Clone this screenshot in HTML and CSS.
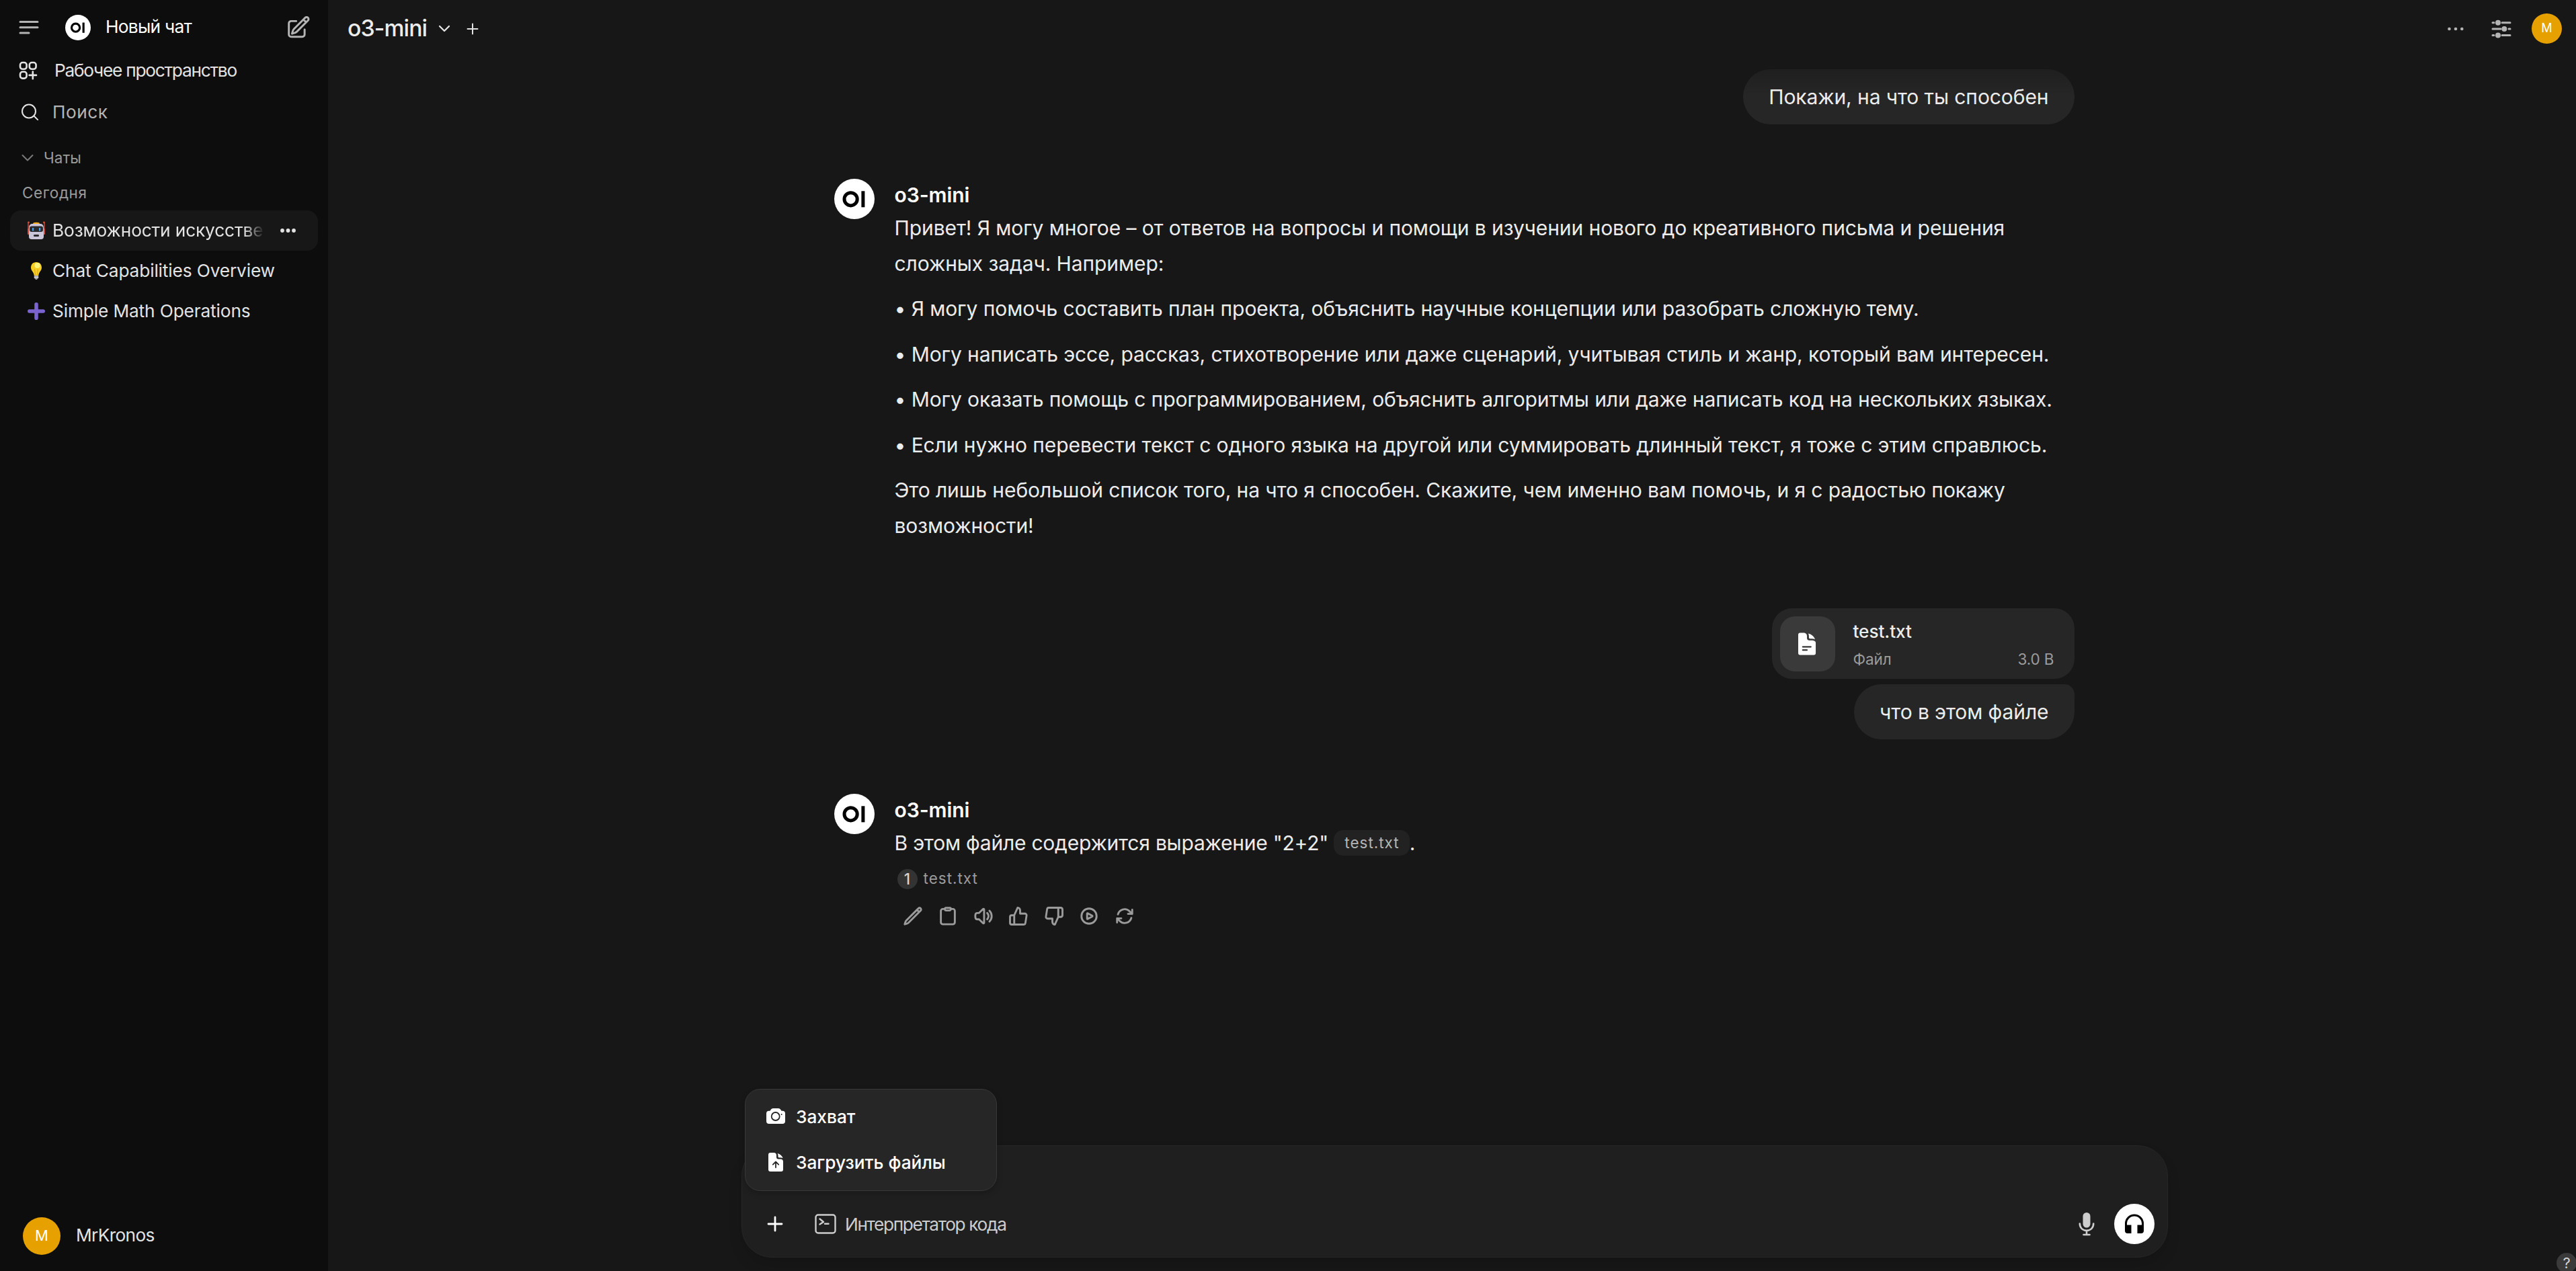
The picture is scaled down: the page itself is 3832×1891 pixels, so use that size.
FILE: index.html
```html
<!DOCTYPE html>
<html lang="ru">
<head>
  <meta charset="UTF-8" />
  <title>Open WebUI</title>
  <link rel="stylesheet" href="styles.css">
</head>
<body>
  <!-- shared icons -->
  <svg class="defs" width="0" height="0">
    <symbol id="logo" viewBox="0 0 60 60">
      <circle cx="30" cy="30" r="30" fill="#fff"/>
      <circle cx="24.6" cy="30.3" r="9.6" fill="none" stroke="#000" stroke-width="5"/>
      <rect x="40.4" y="18.3" width="5" height="24" fill="#000"/>
    </symbol>
  </svg>

  <aside class="sidebar">
    <div class="sidebar-top">
      <svg class="icon-menu" viewBox="0 0 30 22" fill="none" stroke="#b4b4b4" stroke-width="3" stroke-linecap="round"><path d="M2 2.5h26M2 10.7h26M2 19h13"/></svg>
      <svg class="brand-logo"><use href="#logo"/></svg>
      <span class="new-chat">Новый чат</span>
      <svg class="icon-edit" viewBox="0 0 24 24" fill="none" stroke="#b4b4b4" stroke-width="1.9" stroke-linecap="round" stroke-linejoin="round"><path d="m16.862 4.487 1.687-1.688a1.875 1.875 0 1 1 2.652 2.652L10.582 16.07a4.5 4.5 0 0 1-1.897 1.13L6 18l.8-2.685a4.5 4.5 0 0 1 1.13-1.897l8.932-8.931Zm0 0L19.5 7.125M18 14v4.75A2.25 2.25 0 0 1 15.75 21H5.25A2.25 2.25 0 0 1 3 18.75V8.25A2.25 2.25 0 0 1 5.25 6H10"/></svg>
    </div>

    <div class="nav-row workspace">
      <svg class="icon-workspace" viewBox="0 0 28 28" fill="none" stroke="#e3e3e3" stroke-width="2.6" stroke-linecap="round"><rect x="2" y="2" width="9.6" height="9.8" rx="3.6"/><rect x="15.8" y="2" width="9.8" height="9.8" rx="3.6"/><rect x="2" y="15.8" width="9.6" height="9.8" rx="3.6"/><path d="M20.8 15.6v10.6M15.6 20.9h10.4"/></svg>
      <span>Рабочее пространство</span>
    </div>

    <div class="nav-row search">
      <svg class="icon-search" viewBox="0 0 26 26" fill="none" stroke="#e3e3e3" stroke-width="2" stroke-linecap="round"><circle cx="11" cy="11.5" r="10"/><path d="m18.5 18.5 5.6 5.6"/></svg>
      <span>Поиск</span>
    </div>

    <div class="chats-label">
      <svg class="icon-chevron" viewBox="0 0 18 12" fill="none" stroke="#7a7a7a" stroke-width="2" stroke-linecap="round" stroke-linejoin="round"><path d="m1.5 2 7.5 7.5L16.5 2"/></svg>
      <span>Чаты</span>
    </div>
    <div class="day-label">Сегодня</div>

    <div class="chat-item active">
      <svg class="emoji" viewBox="0 0 26 26">
        <path d="M1 1v17M25 1v17" stroke="#dd4a35" stroke-width="1.4"/>
        <circle cx="1.5" cy="1" r="1.4" fill="#dd4a35"/><circle cx="24.5" cy="1" r="1.4" fill="#dd4a35"/>
        <rect x="0" y="10" width="26" height="9" rx="1" fill="#dd4a35"/>
        <ellipse cx="13" cy="3" rx="5" ry="2.2" fill="#f5ab1c"/>
        <path d="M6 3h14q4 1 4 6v13q0 4-4 4H6q-4 0-4-4V9q0-5 4-6z" fill="#cbc6da"/>
        <rect x="3" y="6.5" width="20" height="8.5" rx="3" fill="#2b2b2e"/>
        <rect x="7" y="9" width="2.2" height="4.5" fill="#4aa3ea"/><rect x="17" y="9" width="2.2" height="4.5" fill="#4aa3ea"/>
        <rect x="9" y="19" width="8" height="3" rx="1.2" fill="#2b2b2e"/>
      </svg>
      <span class="chat-title">Возможности искусственного</span>
      <svg class="icon-dots" viewBox="0 0 24 6" fill="#e3e3e3"><circle cx="3" cy="3" r="2.9"/><circle cx="11.5" cy="3" r="2.9"/><circle cx="20" cy="3" r="2.9"/></svg>
    </div>
    <div class="chat-item">
      <svg class="emoji" viewBox="0 0 26 26">
        <path d="M13 0c5 0 8 3.6 8 8 0 5-4.3 6.5-4.8 12H9.8C9.3 14.5 5 13 5 8c0-4.4 3-8 8-8z" fill="#f6cf22"/>
        <path d="M10.5 10.5 11.8 20M15.5 10.5 14.2 20" stroke="#d9a31a" fill="none"/>
        <circle cx="14.5" cy="5" r="4" fill="#fdf57b"/>
        <path d="M9.8 20h6.4v3.5L13.8 26h-1.6l-2.4-2.5z" fill="#a9a9a9"/>
        <path d="M9.8 22.4h6.4" stroke="#e2e2e2"/>
      </svg>
      <span class="chat-title">Chat Capabilities Overview</span>
    </div>
    <div class="chat-item">
      <svg class="emoji" viewBox="0 0 26 26" stroke="#7b63cf" stroke-width="5.6" stroke-linecap="round"><path d="M13 2.8v20.4M2.8 13h20.4"/></svg>
      <span class="chat-title">Simple Math Operations</span>
    </div>

    <div class="user">
      <span class="user-avatar">M</span>
      <span class="user-name">MrKronos</span>
    </div>
  </aside>

  <main class="main">
    <header class="header">
      <span class="model-name">o3-mini</span>
      <svg class="icon-chevron" viewBox="0 0 18 12" fill="none" stroke="#e3e3e3" stroke-width="2.3" stroke-linecap="round" stroke-linejoin="round"><path d="m2 2 7 7 7-7"/></svg>
      <svg class="icon-add" viewBox="0 0 18 18" stroke="#e3e3e3" stroke-width="2" stroke-linecap="round"><path d="M9 1.5v15M1.5 9h15"/></svg>
      <div class="header-right">
        <svg class="icon-more" viewBox="0 0 24 6" fill="#b4b4b4"><circle cx="2.5" cy="3" r="2.3"/><circle cx="12" cy="3" r="2.3"/><circle cx="21.3" cy="3" r="2.3"/></svg>
        <svg class="icon-sliders" viewBox="0 0 30 28" stroke="#b4b4b4" stroke-width="3" stroke-linecap="round"><path d="M2 4.7h2M16 4.7h12M2 14h12M26 14h2M2 23.4h2M16 23.4h12"/><g fill="#b4b4b4" stroke="none"><circle cx="10" cy="4.7" r="4"/><circle cx="19.3" cy="14" r="4"/><circle cx="10" cy="23.4" r="4"/></g></svg>
        <span class="user-avatar small">M</span>
      </div>
    </header>

    <section class="messages">
      <div class="bubble first">Покажи, на что ты способен</div>

      <article class="reply">
        <svg class="avatar"><use href="#logo"/></svg>
        <div class="reply-body">
          <div class="reply-name">o3-mini</div>
          <p>Привет! Я могу многое – от ответов на вопросы и помощи в изучении нового до креативного письма и решения<br>сложных задач. Например:</p>
          <p>• Я могу помочь составить план проекта, объяснить научные концепции или разобрать сложную тему.</p>
          <p>• Могу написать эссе, рассказ, стихотворение или даже сценарий, учитывая стиль и жанр, который вам интересен.</p>
          <p>• Могу оказать помощь с программированием, объяснить алгоритмы или даже написать код на нескольких языках.</p>
          <p>• Если нужно перевести текст с одного языка на другой или суммировать длинный текст, я тоже с этим справлюсь.</p>
          <p>Это лишь небольшой список того, на что я способен. Скажите, чем именно вам помочь, и я с радостью покажу<br>возможности!</p>
        </div>
      </article>

      <div class="file-card">
        <div class="file-icon">
          <svg viewBox="0 0 28 34"><path d="M3 0h6.5q4 1 4 5v3q0 3.500 3.500 3.500h5q5 .5 5 4V31q0 3-3 3H3q-3 0-3-3V3q0-3 3-3z" fill="#fff"/><path d="M15.500 1q8 2 10.500 9-2-1-5-1h-3q-1.500 0-1.500-1.500V5q0-2-1-4z" fill="#fff"/><path d="M7 21.500h12.500M7 26.500h6.500" stroke="#3a3a3a" stroke-width="2.200" stroke-linecap="round"/></svg>
        </div>
        <div class="file-info">
          <div class="file-name">test.txt</div>
          <div class="file-meta"><span>Файл</span><span>3.0 B</span></div>
        </div>
      </div>
      <div class="bubble attached">что в этом файле</div>

      <article class="reply">
        <svg class="avatar"><use href="#logo"/></svg>
        <div class="reply-body">
          <div class="reply-name">o3-mini</div>
          <p class="cited">В этом файле содержится выражение "2+2" <span class="source-chip">test.txt</span>.</p>
          <div class="source"><span class="source-num">1</span><span>test.txt</span></div>
          <div class="actions">
            <svg viewBox="0 0 24 24"><path d="m16.862 4.487 1.687-1.688a1.875 1.875 0 1 1 2.652 2.652L6.832 19.820a4.500 4.500 0 0 1-1.897 1.130l-2.685.8.8-2.685a4.500 4.500 0 0 1 1.130-1.897L16.863 4.487Zm0 0L19.500 7.125"/></svg>
            <svg viewBox="0 0 24 24"><path d="M8.500 3.500H6A2.300 2.300 0 0 0 3.700 5.800v13.600A2.300 2.300 0 0 0 6 21.700h12a2.300 2.300 0 0 0 2.300-2.300V5.800A2.300 2.300 0 0 0 18 3.500h-2.500M9.500 2.200h5a1 1 0 0 1 1 1v.6a1.500 1.500 0 0 1-1.500 1.500h-4a1.500 1.500 0 0 1-1.500-1.500v-.6a1 1 0 0 1 1-1z"/></svg>
            <svg viewBox="0 0 24 24"><path d="M19.114 5.636a9 9 0 0 1 0 12.728M16.463 8.288a5.250 5.250 0 0 1 0 7.424M6.750 8.250l4.720-4.720a.75.75 0 0 1 1.280.53v15.880a.75.75 0 0 1-1.280.53l-4.720-4.720H4.510c-.88 0-1.704-.507-1.938-1.354A9.009 9.009 0 0 1 2.250 12c0-.83.112-1.633.322-2.396C2.806 8.756 3.630 8.250 4.510 8.250H6.750Z"/></svg>
            <svg viewBox="0 0 24 24"><path d="M14 9V5a3 3 0 0 0-3-3l-4 9v11h11.280a2 2 0 0 0 2-1.700l1.380-9a2 2 0 0 0-2-2.300zM7 22H4a2 2 0 0 1-2-2v-7a2 2 0 0 1 2-2h3"/></svg>
            <svg viewBox="0 0 24 24"><path d="M10 15v4a3 3 0 0 0 3 3l4-9V2H5.720a2 2 0 0 0-2 1.700l-1.380 9a2 2 0 0 0 2 2.300zm7-13h2.670A2.310 2.310 0 0 1 22 4v7a2.310 2.310 0 0 1-2.330 2H17"/></svg>
            <svg viewBox="0 0 24 24"><path d="M21 12a9 9 0 1 1-18 0 9 9 0 0 1 18 0Z"/><path d="M15.910 11.672a.375.375 0 0 1 0 .656l-5.603 3.113a.375.375 0 0 1-.557-.328V8.887c0-.286.307-.466.557-.327l5.603 3.112Z"/></svg>
            <svg viewBox="0 0 24 24"><path d="M16.023 9.348h4.992v-.001M2.985 19.644v-4.992m0 0h4.992m-4.993 0 3.181 3.183a8.250 8.250 0 0 0 13.803-3.700M4.031 9.865a8.250 8.250 0 0 1 13.803-3.700l3.181 3.182m0-4.991v4.990"/></svg>
          </div>
        </div>
      </article>
    </section>

    <div class="composer">
      <svg class="icon-plus" viewBox="0 0 24 24" stroke="#fff" stroke-width="2.8" stroke-linecap="round"><path d="M12 2v20M2 12h20"/></svg>
      <div class="code-toggle">
        <svg viewBox="0 0 32 30" fill="none" stroke="#cdcdcd" stroke-width="2.4" stroke-linecap="round" stroke-linejoin="round"><rect x="1.5" y="1.5" width="29" height="27" rx="3.5"/><path d="m7.5 7.5 5.5 4.5-5.5 3.5M15 14.7h5.5"/></svg>
        <span>Интерпретатор кода</span>
      </div>
      <svg class="icon-mic" viewBox="0 0 24 36" fill="none" stroke="#cdcdcd" stroke-width="2.6" stroke-linecap="round"><rect x="6.5" y="1" width="11" height="22.5" rx="5.5" fill="#cdcdcd" stroke="none"/><path d="M1.8 17.5c0 6.5 4.6 10.4 10.2 10.4s10.2-3.9 10.2-10.400M12 28v5.500M7.500 34h9"/></svg>
      <button class="voice-btn">
        <svg viewBox="0 0 30 30"><path d="M2.5 19v-4.500a12.500 12.500 0 0 1 25 0V19" fill="none" stroke="#000" stroke-width="3"/><path d="M1 16.500h9.500V29H5q-4 0-4-4zM29 16.500h-9.500V29H25q4 0 4-4z"/></svg>
      </button>

      <div class="upload-menu">
        <div class="menu-item">
          <svg viewBox="0 0 28 28"><path d="M10 2h8q2 0 3 1.500l1.500 2.200H24q4 0 4 4V21q0 4-4 4H4q-4 0-4-4V9.700q0-4 4-4h1.500L7 3.500Q8 2 10 2z" fill="#fff"/><circle cx="13.700" cy="14" r="6" fill="none" stroke="#262626" stroke-width="1.800"/><circle cx="22.600" cy="11" r="1" fill="#262626"/></svg>
          <span>Захват</span>
        </div>
        <div class="menu-item">
          <svg viewBox="0 0 28 28"><path d="M6 0h5q4 0 4 4v2.500q0 3 3 3h3q4 0 4 4V25q0 3-3 3H6q-3 0-3-3V3q0-3 3-3z" fill="#fff"/><path d="M16.500 1q6 1.500 8 7-1.500-.7-4-.7h-1.500q-1.500 0-1.500-1.500V4q0-1.500-1-3z" fill="#fff"/><path d="M14 22v-7.500M9.800 17.700 14 13.500l4.200 4.200" fill="none" stroke="#262626" stroke-width="1.800" stroke-linecap="round" stroke-linejoin="round"/></svg>
          <span>Загрузить файлы</span>
        </div>
      </div>
    </div>
    <div class="help">?</div>
  </main>
</body>
</html>
```
FILE: styles.css
```css
* {
  box-sizing: border-box;
}
body {
  margin: 0;
  width: 3832px;
  height: 1891px;
  display: flex;
  overflow: hidden;
  background: #171717;
  color: #ececec;
  font-family: Inter, "Liberation Sans", sans-serif;
  font-size: 26.25px;
  white-space: nowrap;
}
svg {
  display: block;
  flex-shrink: 0;
}
.defs {
  position: absolute;
}

/* Sidebar */
.sidebar {
  width: 488px;
  flex-shrink: 0;
  background: #0d0d0d;
  display: flex;
  flex-direction: column;
  color: #e3e3e3;
}
.sidebar-top {
  height: 82px;
  display: flex;
  align-items: center;
  padding: 0 26px 0 28px;
}
.icon-menu {
  width: 30px;
  height: 22px;
}
.brand-logo {
  width: 38px;
  height: 38px;
  margin-left: 39px;
}
.new-chat {
  flex: 1;
  margin-left: 22px;
  padding-bottom: 3px;
  color: #fff;
  letter-spacing: -0.7px;
}
.icon-edit {
  width: 37.5px;
  height: 37.5px;
}
.nav-row {
  height: 45px;
  display: flex;
  align-items: center;
}
.workspace {
  padding-left: 28px;
  letter-spacing: -1.25px;
}
.icon-workspace {
  width: 28px;
  height: 28px;
  margin-right: 25px;
}
.search {
  margin-top: 17px;
  padding-left: 32px;
  color: #b4b4b4;
  letter-spacing: 0.5px;
}
.icon-search {
  width: 26px;
  height: 26px;
  margin-right: 20px;
}
.chats-label,
.day-label {
  height: 35px;
  display: flex;
  align-items: center;
  font-size: 22.5px;
  color: #9b9b9b;
}
.chats-label {
  margin-top: 28px;
  padding-left: 32px;
}
.day-label {
  margin-top: 17px;
  margin-bottom: 9px;
  padding-left: 33px;
  letter-spacing: 0.6px;
}
.icon-chevron {
  width: 18px;
  height: 12px;
}
.chats-label .icon-chevron {
  margin-right: 15px;
}
.chat-item {
  height: 60px;
  margin: 0 15px;
  padding: 0 32px 0 26px;
  border-radius: 16px;
  display: flex;
  align-items: center;
}
.chat-item.active {
  background: #171717;
}
.emoji {
  width: 26px;
  height: 26px;
  margin-right: 11px;
  overflow: visible;
}
.chat-title {
  flex: 1;
  overflow: hidden;
  padding-bottom: 1px;
  letter-spacing: -0.13px;
}
.active .chat-title {
  margin-right: 24px;
  mask-image: linear-gradient(to right, #000 calc(100% - 30px), transparent);
}
.icon-dots {
  width: 24px;
  height: 6px;
}
.user {
  margin-top: auto;
  margin-bottom: 24px;
  padding-left: 34px;
  display: flex;
  align-items: center;
  gap: 23px;
}
.user-name {
  padding-bottom: 3px;
  letter-spacing: -0.65px;
}
.user-avatar {
  width: 56px;
  height: 56px;
  border-radius: 50%;
  background: #e6a000;
  color: #fff;
  font-size: 22px;
  line-height: 54px;
  text-align: center;
}
.user-avatar.small {
  width: 45px;
  height: 45px;
  font-size: 18px;
  line-height: 43px;
}

/* Main area */
.main {
  flex: 1;
  position: relative;
  display: flex;
  flex-direction: column;
  align-items: center;
}
.header {
  width: 100%;
  height: 85px;
  display: flex;
  align-items: center;
  padding: 0 21px 0 29px;
}
.model-name {
  font-size: 33.75px;
  font-weight: 500;
  letter-spacing: -0.9px;
  margin-right: 17px;
  padding-bottom: 3px;
}
.icon-add {
  width: 18px;
  height: 18px;
  margin-left: 24px;
}
.header-right {
  margin-left: auto;
  display: flex;
  align-items: center;
}
.icon-more {
  width: 24px;
  height: 6px;
}
.icon-sliders {
  width: 30px;
  height: 28px;
  margin: 0 30px 0 41px;
}

.messages {
  width: 1845px;
  margin-left: 6px;
  display: flex;
  flex-direction: column;
  font-size: 30px;
  line-height: 52.5px;
  letter-spacing: -0.09px;
}
.bubble {
  align-self: flex-end;
  height: 82px;
  padding: 0 38px;
  border-radius: 41px;
  background: #262626;
  line-height: 82px;
}
.bubble.first {
  margin-top: 18px;
  background: linear-gradient(#1f1f1f, #262626 40px);
}
.bubble.attached {
  margin-top: 8px;
  border-top-right-radius: 15px;
}
.reply {
  margin-top: 81px;
  display: flex;
  gap: 30px;
}
.reply-body {
  padding-top: 1px;
}
.avatar {
  width: 60px;
  height: 60px;
}
.reply-name {
  height: 46px;
  line-height: 46px;
  font-weight: 600;
  color: #fff;
}
.reply p {
  margin: 0 0 15px;
}
.reply p:last-child {
  margin-bottom: 0;
}
.reply .cited {
  letter-spacing: -0.22px;
}

.file-card {
  align-self: flex-end;
  width: 450px;
  height: 105px;
  margin-top: 97px;
  padding: 0 30px 0 12px;
  border-radius: 30px;
  background: #262626;
  display: flex;
  align-items: center;
}
.file-icon {
  width: 82px;
  height: 82px;
  border-radius: 22px;
  background: #3a3a3a;
  display: flex;
  align-items: center;
  justify-content: center;
}
.file-icon svg {
  width: 27px;
  height: 34px;
}
.file-info {
  flex: 1;
  margin-left: 27px;
  padding-top: 4px;
}
.file-name {
  font-size: 26.25px;
  font-weight: 500;
  line-height: 41px;
}
.file-meta {
  display: flex;
  justify-content: space-between;
  font-size: 22.5px;
  line-height: 41px;
  color: #9b9b9b;
}

.source-chip {
  display: inline-block;
  height: 38px;
  padding: 0 15px 0 16px;
  border-radius: 14px;
  background: #222;
  color: #b4b4b4;
  font-size: 22.5px;
  line-height: 38px;
  letter-spacing: 1px;
  vertical-align: 3px;
}
.source {
  margin-top: -3px;
  margin-left: 4px;
  height: 30px;
  display: flex;
  align-items: center;
  gap: 9px;
  font-size: 22.5px;
  letter-spacing: 1px;
  color: #9b9b9b;
}
.source-num {
  width: 30px;
  height: 30px;
  border-radius: 50%;
  background: #333;
  color: #d4d4d4;
  font-weight: 500;
  letter-spacing: 0;
  text-align: center;
  line-height: 30px;
}
.actions {
  margin-top: 25px;
  margin-left: 12px;
  display: flex;
  gap: 22.5px;
}
.actions svg {
  width: 30px;
  height: 30px;
  fill: none;
  stroke: #9b9b9b;
  stroke-width: 2.3;
  stroke-linecap: round;
  stroke-linejoin: round;
}

/* Message input */
.composer {
  position: relative;
  width: 2122px;
  height: 167px;
  margin: auto 0 20px 8px;
  padding: 0 19px 19px 37px;
  border: 1px solid #262626;
  border-radius: 45px;
  background: #1f1f1f;
  box-shadow: 0 12px 20px rgba(0, 0, 0, 0.12);
  display: flex;
  align-items: flex-end;
}
.icon-plus {
  width: 24px;
  height: 24px;
  margin-bottom: 18px;
}
.code-toggle {
  margin-left: 47px;
  height: 60px;
  display: flex;
  align-items: center;
  gap: 13px;
  color: #cdcdcd;
  letter-spacing: -1.35px;
}
.code-toggle svg {
  width: 32px;
  height: 30px;
}
.icon-mic {
  width: 24px;
  height: 36px;
  margin: 0 29px 12px auto;
}
.voice-btn {
  width: 60px;
  height: 60px;
  padding: 0;
  border: none;
  border-radius: 50%;
  background: #fff;
  display: flex;
  align-items: center;
  justify-content: center;
}
.voice-btn svg {
  width: 30px;
  height: 30px;
}
.upload-menu {
  position: absolute;
  left: 4px;
  top: -85px;
  width: 375px;
  height: 152px;
  padding: 6px 31px;
  border: 1px solid #383838;
  border-radius: 23px;
  background: #262626;
  box-shadow: 0 4px 10px rgba(0, 0, 0, 0.2);
  color: #fff;
  font-weight: 500;
}
.menu-item {
  height: 68px;
  display: flex;
  align-items: center;
  gap: 16px;
}
.menu-item svg {
  width: 28px;
  height: 28px;
}

.help {
  position: absolute;
  right: -1px;
  bottom: -3px;
  width: 30px;
  height: 30px;
  border-radius: 50%;
  background: #3a3a3a;
  color: #d4d4d4;
  font-size: 22px;
  line-height: 30px;
  text-align: center;
}
```
